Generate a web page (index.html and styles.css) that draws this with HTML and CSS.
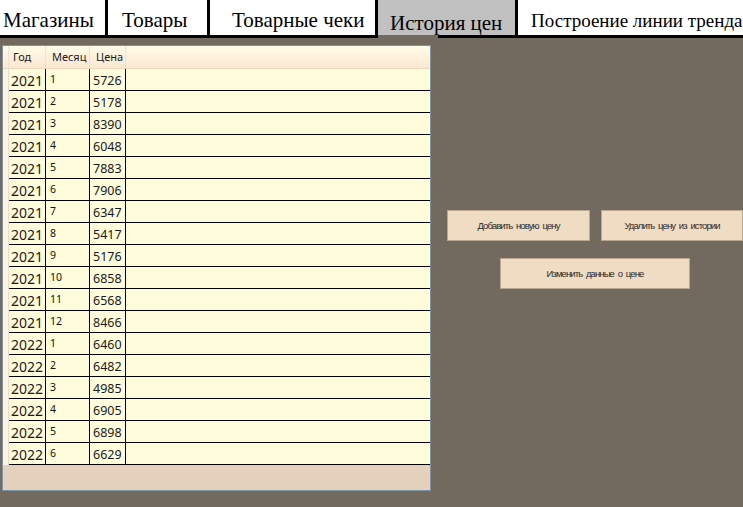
FILE: index.html
```html
<!DOCTYPE html>
<html lang="ru">
<head>
<meta charset="utf-8">
<title>История цен</title>
<link rel="stylesheet" href="styles.css">
</head>
<body>
<nav class="tabs">
  <div class="tab tab-1">Магазины</div>
  <div class="tab tab-2">Товары</div>
  <div class="tab tab-3">Товарные чеки</div>
  <div class="tab tab-4 active">История цен</div>
  <div class="tab tab-5">Построение линии тренда</div>
</nav>
<main class="content">
  <section class="grid-frame">
    <div class="grid-head">
      <div class="rh"></div>
      <div class="hc c-year">Год</div>
      <div class="hc c-month">Месяц</div>
      <div class="hc c-price">Цена</div>
      <div class="hc c-fill"></div>
    </div>
    <div class="grid-body" id="rows">
      <div class="row"><div class="rh"></div><div class="c c-year">2021</div><div class="c c-month">1</div><div class="c c-price">5726</div><div class="c c-fill"></div></div>
      <div class="row"><div class="rh"></div><div class="c c-year">2021</div><div class="c c-month">2</div><div class="c c-price">5178</div><div class="c c-fill"></div></div>
      <div class="row"><div class="rh"></div><div class="c c-year">2021</div><div class="c c-month">3</div><div class="c c-price">8390</div><div class="c c-fill"></div></div>
      <div class="row"><div class="rh"></div><div class="c c-year">2021</div><div class="c c-month">4</div><div class="c c-price">6048</div><div class="c c-fill"></div></div>
      <div class="row"><div class="rh"></div><div class="c c-year">2021</div><div class="c c-month">5</div><div class="c c-price">7883</div><div class="c c-fill"></div></div>
      <div class="row"><div class="rh"></div><div class="c c-year">2021</div><div class="c c-month">6</div><div class="c c-price">7906</div><div class="c c-fill"></div></div>
      <div class="row"><div class="rh"></div><div class="c c-year">2021</div><div class="c c-month">7</div><div class="c c-price">6347</div><div class="c c-fill"></div></div>
      <div class="row"><div class="rh"></div><div class="c c-year">2021</div><div class="c c-month">8</div><div class="c c-price">5417</div><div class="c c-fill"></div></div>
      <div class="row"><div class="rh"></div><div class="c c-year">2021</div><div class="c c-month">9</div><div class="c c-price">5176</div><div class="c c-fill"></div></div>
      <div class="row"><div class="rh"></div><div class="c c-year">2021</div><div class="c c-month">10</div><div class="c c-price">6858</div><div class="c c-fill"></div></div>
      <div class="row"><div class="rh"></div><div class="c c-year">2021</div><div class="c c-month">11</div><div class="c c-price">6568</div><div class="c c-fill"></div></div>
      <div class="row"><div class="rh"></div><div class="c c-year">2021</div><div class="c c-month">12</div><div class="c c-price">8466</div><div class="c c-fill"></div></div>
      <div class="row"><div class="rh"></div><div class="c c-year">2022</div><div class="c c-month">1</div><div class="c c-price">6460</div><div class="c c-fill"></div></div>
      <div class="row"><div class="rh"></div><div class="c c-year">2022</div><div class="c c-month">2</div><div class="c c-price">6482</div><div class="c c-fill"></div></div>
      <div class="row"><div class="rh"></div><div class="c c-year">2022</div><div class="c c-month">3</div><div class="c c-price">4985</div><div class="c c-fill"></div></div>
      <div class="row"><div class="rh"></div><div class="c c-year">2022</div><div class="c c-month">4</div><div class="c c-price">6905</div><div class="c c-fill"></div></div>
      <div class="row"><div class="rh"></div><div class="c c-year">2022</div><div class="c c-month">5</div><div class="c c-price">6898</div><div class="c c-fill"></div></div>
      <div class="row"><div class="rh"></div><div class="c c-year">2022</div><div class="c c-month">6</div><div class="c c-price">6629</div><div class="c c-fill"></div></div>
    </div>
  </section>
  <section class="actions">
    <div class="btn-row">
      <button class="btn btn-add">Добавить новую цену</button>
      <button class="btn btn-del">Удалить цену из истории</button>
    </div>
    <button class="btn btn-edit">Изменить данные о цене</button>
  </section>
</main>
</body>
</html>
```
FILE: styles.css
```css
html, body {
  margin: 0;
  padding: 0;
}
body {
  width: 743px;
  height: 507px;
  overflow: hidden;
  background: #726a5e;
  font-family: "Noto Sans", "DejaVu Sans", sans-serif;
}

/* ---------- tabs ---------- */
.tabs {
  display: flex;
  height: 35px;
  background: #ffffff;
  border-bottom: 3px solid #000;
  font-family: "Liberation Serif", "Times New Roman", serif;
  color: #000;
}
.tab {
  box-sizing: border-box;
  height: 35px;
  font-size: 21px;
  line-height: 21px;
  padding-top: 10px;
  white-space: nowrap;
  border-left: 3px solid #000;
}
.tab-1 { width: 105px; padding-left: 3px; border-left: none; }
.tab-2 { width: 102px; padding-left: 14px; }
.tab-3 { width: 168px; padding-left: 22px; }
.tab-4 { width: 140px; padding-left: 12px; }
.tab-5 { flex: 1; padding-left: 13px; font-size: 19px; padding-top: 10px; }
.tab.active {
  position: relative;
  background: #c0c0c0;
  padding-top: 13px;
}
.tab.active::after {
  content: "";
  position: absolute;
  left: 0;
  top: 35px;
  width: 60px;
  height: 3px;
  background: #726a5e;
}

/* ---------- content ---------- */
.content {
  display: flex;
  align-items: flex-start;
}

.grid-frame {
  box-sizing: border-box;
  width: 429px;
  height: 446px;
  margin: 7px 0 0 2px;
  border: 1px solid #7d93a6;
  background: #e3d1bb;
  display: flex;
  flex-direction: column;
}
.grid-head {
  display: flex;
  height: 22px;
  border-bottom: 1px solid #ecd7bd;
  background: linear-gradient(#fffbe8, #fdf0dc 55%, #fbe8d0);
  font-size: 11px;
  line-height: 22px;
  color: #1a1a1a;
}
.grid-head .rh {
  width: 5px;
  border-right: 1px solid #f0e0cc;
}
.hc {
  box-sizing: border-box;
  border-right: 1px solid #f1e2cf;
  padding-left: 4px;
}
.c-year { width: 37px; }
.c-month { width: 44px; }
.c-price { width: 36px; }
.c-fill { flex: 1; border-right: none; }

.grid-head .c-year { width: 37px; padding-left: 4px; }
.grid-head .c-month { padding-left: 6px; }
.grid-head .c-price { padding-left: 6px; }

.row {
  display: flex;
  height: 22px;
}
.row .rh {
  width: 6px;
  box-sizing: border-box;
  background: #fdf3e2;
  border-right: 1px solid #eedcc4;
}
.c {
  box-sizing: border-box;
  height: 22px;
  background: #fffcdc;
  border-bottom: 1px solid #000;
  border-right: 1px solid #000;
  color: #1a1a1a;
}
.row .c-year {
  width: 37px;
  font-size: 14px;
  line-height: 24px;
  padding-left: 2px;
}
.row .c-month {
  width: 44px;
  font-size: 10.5px;
  line-height: 14px;
  padding-left: 4px;
  padding-top: 3px;
  color: #111;
}
.row .c-price {
  width: 36px;
  font-size: 12.5px;
  line-height: 24px;
  padding-left: 3px;
}
.row .c-fill {
  flex: 1;
  border-right: none;
}

/* ---------- actions ---------- */
.actions {
  display: flex;
  flex-direction: column;
  padding: 172px 0 0 16px;
}
.btn-row {
  display: flex;
  gap: 11px;
}
.btn {
  box-sizing: border-box;
  height: 31px;
  background: #efdcc3;
  border: 1px solid #b8a690;
  border-radius: 0;
  font-family: "Liberation Sans", Arial, sans-serif;
  font-size: 9.5px;
  letter-spacing: -0.9px;
  word-spacing: 2px;
  color: #2a2a2a;
  padding: 0;
}
.btn-add { width: 143px; }
.btn-del { width: 142px; }
.btn-edit {
  width: 190px;
  margin: 17px 0 0 53px;
}
```
